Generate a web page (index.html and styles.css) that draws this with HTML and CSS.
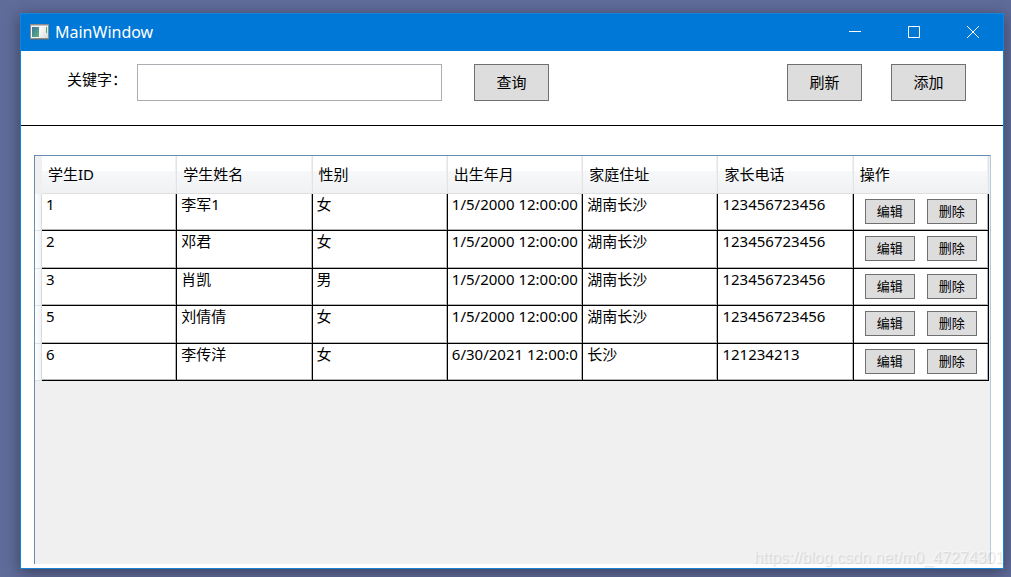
FILE: index.html
```html
<!DOCTYPE html>
<html lang="zh-CN">
<head>
<meta charset="utf-8">
<title>MainWindow</title>
<link rel="stylesheet" href="styles.css">
</head>
<body>
<main class="window">
  <header class="titlebar">
    <svg class="app-icon" width="19" height="16" viewBox="0 0 19 16" aria-hidden="true">
      <defs>
        <linearGradient id="pane" x1="0" y1="0" x2="1" y2="1"><stop offset="0" stop-color="#3f74a0"/><stop offset="1" stop-color="#5db37c"/></linearGradient>
        <linearGradient id="page" x1="0" y1="0" x2="1" y2="1"><stop offset="0" stop-color="#fff"/><stop offset="1" stop-color="#d8d8d8"/></linearGradient>
      </defs>
      <rect x="0.5" y="0.5" width="18" height="14" fill="#f4f4f4" stroke="#8c8c8c"/>
      <rect x="1" y="1" width="17" height="1" fill="#c9c4c0"/>
      <rect x="2" y="3" width="7" height="10" fill="url(#pane)"/>
      <rect x="10" y="3" width="8" height="11" fill="url(#page)"/>
      <rect x="16" y="3" width="1" height="6" fill="#58a878"/>
      <rect x="0" y="15" width="19" height="1" fill="#3c6f9c"/>
    </svg>
    <h1 class="title">MainWindow</h1>
    <div class="captions">
      <button class="caption" type="button" aria-label="Minimize"><svg width="12" height="12" viewBox="0 0 12 12"><path d="M0 5.5H12"/></svg></button>
      <button class="caption" type="button" aria-label="Maximize"><svg width="12" height="12" viewBox="0 0 12 12"><path d="M.5 .5H11.5V11.5H.5Z"/></svg></button>
      <button class="caption" type="button" aria-label="Close"><svg width="12" height="12" viewBox="0 0 12 12"><path d="M0 0L12 12M12 0L0 12"/></svg></button>
    </div>
  </header>
  <form class="toolbar">
    <label class="keyword-label" for="keyword">关键字：</label>
    <input class="keyword" id="keyword" type="text">
    <button class="button" type="button">查询</button>
    <div class="toolbar-end">
      <button class="button" type="button">刷新</button>
      <button class="button" type="button">添加</button>
    </div>
  </form>
  <section class="content">
    <div class="grid">
      <table class="students">
        <colgroup><col class="selector-col"><col span="7"></colgroup>
        <thead>
          <tr><td class="corner"></td><th>学生ID</th><th>学生姓名</th><th>性别</th><th>出生年月</th><th>家庭住址</th><th>家长电话</th><th>操作</th></tr>
        </thead>
        <tbody>
          <tr><td class="selector"></td><td>1</td><td>李军1</td><td>女</td><td><div class="clip">1/5/2000 12:00:00</div></td><td>湖南长沙</td><td>123456723456</td><td><div class="actions"><button class="button small" type="button">编辑</button><button class="button small" type="button">删除</button></div></td></tr>
          <tr><td class="selector"></td><td>2</td><td>邓君</td><td>女</td><td><div class="clip">1/5/2000 12:00:00</div></td><td>湖南长沙</td><td>123456723456</td><td><div class="actions"><button class="button small" type="button">编辑</button><button class="button small" type="button">删除</button></div></td></tr>
          <tr><td class="selector"></td><td>3</td><td>肖凯</td><td>男</td><td><div class="clip">1/5/2000 12:00:00</div></td><td>湖南长沙</td><td>123456723456</td><td><div class="actions"><button class="button small" type="button">编辑</button><button class="button small" type="button">删除</button></div></td></tr>
          <tr><td class="selector"></td><td>5</td><td>刘倩倩</td><td>女</td><td><div class="clip">1/5/2000 12:00:00</div></td><td>湖南长沙</td><td>123456723456</td><td><div class="actions"><button class="button small" type="button">编辑</button><button class="button small" type="button">删除</button></div></td></tr>
          <tr><td class="selector"></td><td>6</td><td>李传洋</td><td>女</td><td><div class="clip">6/30/2021 12:00:0</div></td><td>长沙</td><td>121234213</td><td><div class="actions"><button class="button small" type="button">编辑</button><button class="button small" type="button">删除</button></div></td></tr>
        </tbody>
      </table>
    </div>
  </section>
</main>
<div class="watermark">https://blog.csdn.net/m0_47274301</div>
</body>
</html>
```

FILE: styles.css
```css
* {
  box-sizing: border-box;
}

body {
  margin: 0;
  min-height: 100vh;
  padding: 13px 7px 8px 20px;
  display: flex;
  background: #5f6b99;
  color: #000;
  font: 15px/20px "Noto Sans", "Noto Sans CJK SC", sans-serif;
}

.window {
  flex: 1;
  min-width: 0;
  display: flex;
  flex-direction: column;
  background: #fff;
  border: 1px solid #1883d7;
  box-shadow: 0 3px 14px rgba(0, 0, 0, 0.4);
}

.titlebar {
  display: flex;
  align-items: center;
  height: 37px;
  padding: 0 1px 2px 9px;
  background: #0078d7;
  color: #fff;
}

.title {
  margin: 0 0 0 6px;
  font-size: 16px;
  font-weight: 400;
}

.captions {
  display: flex;
  align-self: stretch;
  margin-left: auto;
}

.caption {
  width: 59px;
  padding: 0;
  border: 0;
  background: none;
}

.caption svg {
  display: block;
  margin: 0 auto;
  fill: none;
  stroke: #fff;
}

.toolbar {
  display: flex;
  align-items: flex-start;
  height: 75px;
  padding: 13px 37px 0 46px;
  border-bottom: 1px solid #000;
}

.keyword-label {
  margin-right: 10px;
  line-height: 30px;
  white-space: nowrap;
}

.keyword {
  flex: 0 1 305px;
  min-width: 0;
  height: 37px;
  margin-right: 32px;
  padding: 0 4px;
  border: 1px solid #abadb3;
  font: inherit;
}

.toolbar-end {
  display: flex;
  gap: 29px;
  margin-left: auto;
}

.button {
  width: 75px;
  height: 37px;
  padding: 0 0 2px;
  border: 1px solid #707070;
  border-radius: 0;
  background: #ddd;
  color: #000;
  font: inherit;
}

.small {
  width: 50px;
  height: 25px;
  font-size: 13px;
  line-height: 18px;
}

.content {
  flex: 1;
  display: flex;
  padding: 29px 12px 4px 13px;
}

.grid {
  flex: 1;
  min-width: 0;
  padding-right: 1px;
  border: 1px solid #688caf;
  border-right-color: #b5cadf;
  border-bottom: 0;
  background: #f0f0f0;
}

.students {
  width: 100%;
  table-layout: fixed;
  border-collapse: separate;
  border-spacing: 0;
}

.selector-col {
  width: 7px;
}

.students th {
  height: 38px;
  padding: 0 6px 2px;
  border-right: 1px solid #e2e3e5;
  border-bottom: 1px solid #dfdfe0;
  background: linear-gradient(#fff 40%, #f7f8fa 41%, #f0f1f3);
  box-shadow: inset -1px 0 #f0f0f1;
  font-weight: 400;
  text-align: left;
}

.students td {
  height: 37px;
  padding: 0 4px;
  border-right: 1px solid #000;
  border-bottom: 1px solid #000;
  background: #fff;
  box-shadow: inset -1px -1px #b4b4b4;
  vertical-align: top;
}

.students tbody tr:nth-child(even) td {
  height: 38px;
}

.students .corner {
  padding: 0;
  border: 0;
  background: #f0f0f0;
  box-shadow: none;
}

.students .selector {
  padding: 0;
  border-right: 1px solid #d9dadc;
  border-bottom-color: #dfdfe0;
  background: linear-gradient(90deg, #fff, #f2f3f5);
  box-shadow: none;
}

.clip {
  overflow: hidden;
  white-space: nowrap;
}

.actions {
  display: flex;
  gap: 12px;
  padding: 5px 0 0 7px;
}

.watermark {
  position: absolute;
  right: 7px;
  bottom: 9px;
  color: rgba(255, 255, 255, 0.5);
  font: 16px/20px "Liberation Sans", sans-serif;
  text-shadow: 1px 1px 1px rgba(0, 0, 0, 0.13);
}
```
